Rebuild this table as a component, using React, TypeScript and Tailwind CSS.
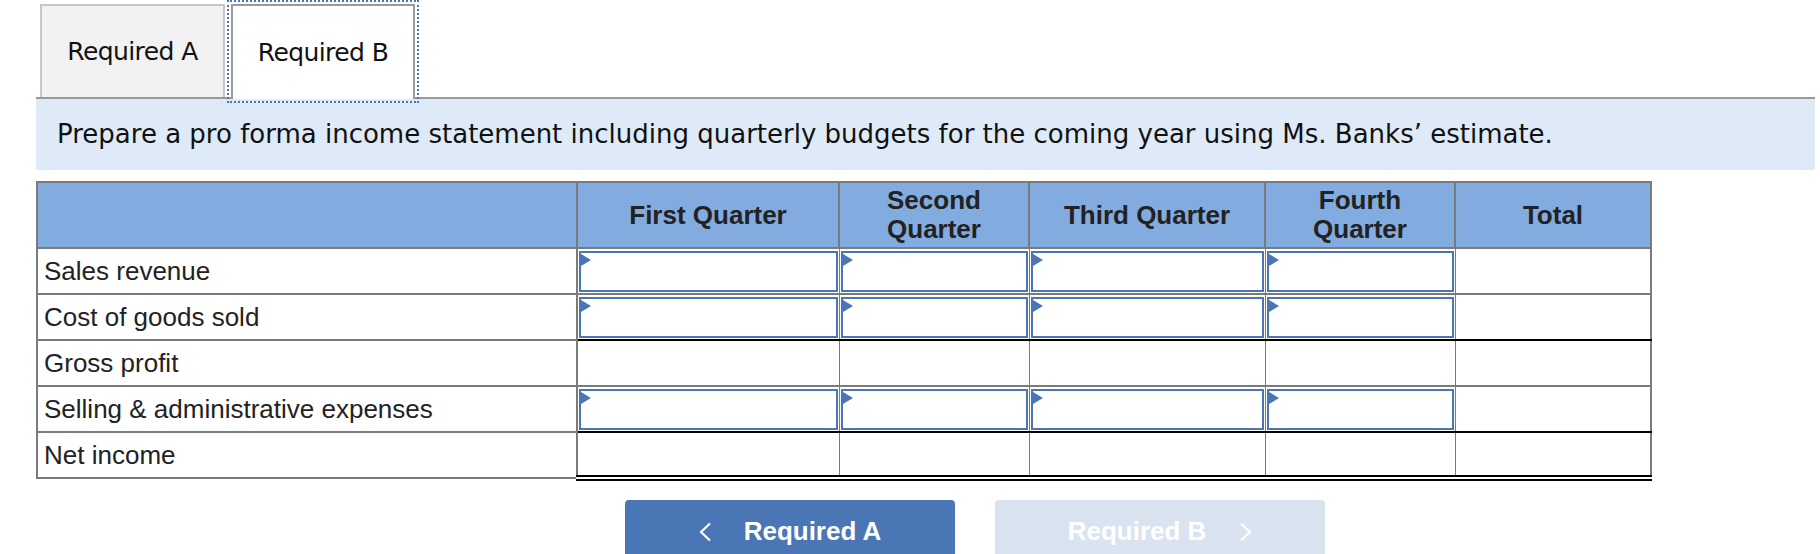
import React from "react";

type Row = {
  label: string;
  inputs: boolean;
  bottom: "gray" | "black" | "double";
};

const ROWS: Row[] = [
  { label: "Sales revenue", inputs: true, bottom: "gray" },
  { label: "Cost of goods sold", inputs: true, bottom: "black" },
  { label: "Gross profit", inputs: false, bottom: "gray" },
  { label: "Selling & administrative expenses", inputs: true, bottom: "black" },
  { label: "Net income", inputs: false, bottom: "double" },
];

const HEADERS = ["First Quarter", "Second Quarter", "Third Quarter", "Fourth Quarter", "Total"];

function InputBox() {
  return (
    <div className="relative h-[41px] border-2 border-[#4a76b5] bg-white">
      <span className="absolute top-px left-0 h-0 w-0 border-y-[6px] border-l-[10px] border-y-transparent border-l-[#4a76b5]" />
    </div>
  );
}

function Chevron({ dir }: { dir: "left" | "right" }) {
  return (
    <svg width="13" height="20" viewBox="0 0 13 20" aria-hidden="true">
      <polyline
        points={dir === "left" ? "11,1.5 2,10 11,18.5" : "2,1.5 11,10 2,18.5"}
        fill="none"
        stroke="white"
        strokeWidth="2.2"
      />
    </svg>
  );
}

export default function App() {
  return (
    <div className="h-[554px] w-[1820px] overflow-hidden bg-white pt-[4px]">
      {/* tabs */}
      <div className="ml-[36px] flex w-[1779px] items-end gap-[6px] border-b-2 border-[#9a9a9a] pl-[4px] font-['DejaVu_Sans',Verdana,sans-serif] text-[25px] tracking-[-0.6px] text-[#111]">
        <button
          type="button"
          className="flex h-[93px] w-[185px] items-center justify-center border-2 border-b-0 border-[#c6c6c6] bg-[#f2f2f2]"
        >
          Required A
        </button>
        <button
          type="button"
          className="relative z-10 -mb-[2px] flex h-[95px] w-[184px] items-center justify-center border-2 border-b-0 border-[#9a9a9a] bg-white outline-2 outline-offset-2 outline-[#4a76b5] outline-dotted"
        >
          Required B
        </button>
      </div>

      {/* prompt */}
      <div className="ml-[36px] flex h-[71px] w-[1779px] items-center bg-[#deeaf7] pl-[21px] font-['DejaVu_Sans',Verdana,sans-serif] text-[26px] text-[#111]">
        Prepare a pro forma income statement including quarterly budgets for the coming year using Ms. Banks’ estimate.
      </div>

      {/* table */}
      <table className="mt-[11px] ml-[36px] w-[1616px] table-fixed border-collapse font-['Liberation_Sans',Arial,sans-serif] text-[26px] text-[#222]">
        <colgroup>
          <col className="w-[540px]" />
          <col className="w-[262px]" />
          <col className="w-[190px]" />
          <col className="w-[236px]" />
          <col className="w-[190px]" />
          <col className="w-[196px]" />
        </colgroup>
        <thead>
          <tr>
            <th className="h-[66px] border-2 border-[#7b7b7b] bg-[#82abdf]" />
            {HEADERS.map((h) => (
              <th
                key={h}
                className="h-[66px] border-2 border-[#7b7b7b] bg-[#82abdf] px-2 text-center leading-[29px] font-bold"
              >
                {h}
              </th>
            ))}
          </tr>
        </thead>
        <tbody>
          {ROWS.map((row) => {
            const bottom =
              row.bottom === "black"
                ? "border-b-2 border-b-black"
                : row.bottom === "double"
                  ? "border-b-[6px] border-b-black [border-bottom-style:double]"
                  : "border-b-2 border-b-[#7b7b7b]";
            return (
              <tr key={row.label}>
                <td className="h-[46px] border-2 border-[#7b7b7b] pl-[6px] leading-[30px]">
                  {row.label}
                </td>
                {HEADERS.map((h, i) => (
                  <td
                    key={h}
                    className={`h-[46px] border-x border-t-2 border-[#7b7b7b] p-px ${
                      i === HEADERS.length - 1 ? "border-r-2" : ""
                    } ${bottom}`}
                  >
                    {row.inputs && i < 4 ? <InputBox /> : null}
                  </td>
                ))}
              </tr>
            );
          })}
        </tbody>
      </table>

      {/* nav buttons */}
      <div className="mt-[19px] ml-[625px] flex gap-[40px] font-['Liberation_Sans',Arial,sans-serif] text-[26px] font-bold text-white">
        <button
          type="button"
          className="flex h-[63px] w-[330px] items-center justify-center gap-[32px] rounded-[4px] bg-[#4a76b5]"
        >
          <Chevron dir="left" />
          <span>Required A</span>
        </button>
        <button
          type="button"
          className="flex h-[63px] w-[330px] items-center justify-center gap-[33px] rounded-[4px] bg-[#dae3f0]"
        >
          <span>Required B</span>
          <Chevron dir="right" />
        </button>
      </div>
    </div>
  );
}
